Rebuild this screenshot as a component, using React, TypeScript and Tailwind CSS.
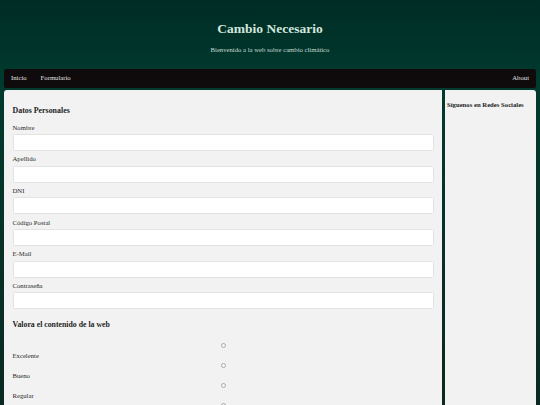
export default function App() {
  const fields = ['Nombre', 'Apellido', 'DNI', 'Código Postal', 'E-Mail', 'Contraseña']
  const ratings = ['Excelente', 'Bueno', 'Regular', '']

  return (
    <div
      className="min-h-screen w-[540px] h-[405px] overflow-hidden bg-gradient-to-b from-[#002c24] via-[#003a2e] via-20% to-[#0b2822] text-[6.7px] font-['Liberation_Serif',serif]"
    >
      {/* ── HEADER ── */}
      <header className="h-[69px] flex flex-col items-center pt-[21px]">
        <h1 className="text-[13.5px] leading-[16px] font-bold text-[#d3e6df]">Cambio Necesario</h1>
        <p className="mt-[9px] leading-[8px] text-[#c7d9d2]">Bienvenido a la web sobre cambio climático</p>
      </header>

      {/* ── NAV ── */}
      <nav className="mx-[4px] h-[19px] rounded-[2px] bg-[#0f0b0d] flex items-center justify-between pl-[7px] pr-[7px] text-[#e2e2e2]">
        <div className="flex items-center gap-[14px]">
          <a href="#">Inicio</a>
          <a href="#">Formulario</a>
        </div>
        <a href="#">About</a>
      </nav>

      {/* ── MAIN ── */}
      <div className="flex gap-[3px] mx-[4px] mt-[2px]">
        <main className="w-[438px] h-[330px] bg-[#f2f2f2] rounded-tl-[3px] px-[8.5px] pt-[16px] text-[#1e1e1e]">
          <h3 className="text-[7.9px] leading-[10px] font-bold">Datos Personales</h3>
          <div className="mt-[7px]">
            {fields.map((f) => (
              <div key={f} className="mb-[3.7px]">
                <label className="block leading-[8px] pt-[0.5px] text-[#2a2a2a]">{f}</label>
                <input
                  type={f === 'Contraseña' ? 'password' : 'text'}
                  className="mt-[2.5px] block w-full h-[17px] bg-white border border-[#e3e3e3] rounded-[1.5px] outline-none"
                />
              </div>
            ))}
          </div>

          <h3 className="mt-[11px] text-[7.8px] leading-[10px] font-bold">Valora el contenido de la web</h3>
          <div className="mt-[12.5px]">
            {ratings.map((r, i) => (
              <div key={i}>
                <span className="block mx-auto w-[5px] h-[5px] rounded-full border border-[#a8a8a8] bg-[#fafafa]" />
                {r && (
                  <label className="block mt-[4px] mb-[3px] leading-[8px] text-[#2a2a2a]">{r}</label>
                )}
              </div>
            ))}
          </div>
        </main>

        <aside className="w-[91px] h-[330px] bg-[#f2f2f2] rounded-tr-[3px] px-[2px] pt-[10.5px] text-[#1e1e1e]">
          <h4 className="font-bold leading-[8px]">Síguenos en Redes Sociales</h4>
        </aside>
      </div>
    </div>
  )
}
